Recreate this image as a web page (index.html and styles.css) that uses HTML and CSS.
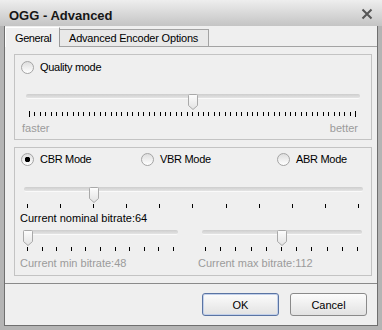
FILE: index.html
```html
<!DOCTYPE html>
<html lang="en">
<head>
  <meta charset="UTF-8">
  <title>OGG - Advanced</title>
  <link rel="stylesheet" href="styles.css">
</head>
<body>
  <div class="dialog">
    <div class="titlebar">
      <span class="title">OGG - Advanced</span>
      <svg class="close" width="12" height="12" viewBox="0 0 12 12">
        <path d="M1.5 1.5 L10.5 10.5 M10.5 1.5 L1.5 10.5" stroke="#555" stroke-width="2" fill="none"/>
      </svg>
    </div>
    <div class="client">
      <div class="tabs">
        <div class="tab active">General</div>
        <div class="tab">Advanced Encoder Options</div>
      </div>
      <div class="panel">
        <!-- Quality mode -->
        <div class="group g1">
          <label class="radio-row"><span class="radio"></span>Quality mode</label>
          <div class="slider s1" style="--v: 0.5">
            <div class="track"></div>
            <svg class="thumb" width="10" height="16" viewBox="0 0 10 16"><defs><linearGradient id="tg1" x1="0" y1="0" x2="0" y2="1"><stop offset="0" stop-color="#fdfdfd"/><stop offset="1" stop-color="#e2e2e2"/></linearGradient></defs><path d="M1.5 0.5 H8.5 Q9.5 0.5 9.5 1.5 V11.5 L5 15.5 L0.5 11.5 V1.5 Q0.5 0.5 1.5 0.5 Z" fill="url(#tg1)" stroke="#a9a9a9"/></svg>
          </div>
          <div class="ticks dense t1"><i></i><i></i><i></i><i></i><i></i><i></i><i></i><i></i><i></i><i></i><i></i><i></i><i></i><i></i><i></i><i></i><i></i><i></i><i></i><i></i><i></i><i></i><i></i><i></i><i></i><i></i><i></i><i></i><i></i><i></i><i></i><i></i><i></i><i></i><i></i><i></i><i></i><i></i><i></i><i></i><i></i><i></i><i></i><i></i><i></i><i></i><i></i><i></i><i></i><i></i><i></i><i></i><i></i><i></i><i></i><i></i><i></i><i></i><i></i><i></i><i></i></div>
          <div class="scale"><span>faster</span><span>better</span></div>
        </div>
        <!-- Bitrate modes -->
        <div class="group g2">
          <div class="modes">
            <label class="radio-row"><span class="radio checked"></span>CBR Mode</label>
            <label class="radio-row"><span class="radio"></span>VBR Mode</label>
            <label class="radio-row"><span class="radio"></span>ABR Mode</label>
          </div>
          <div class="slider s2" style="--v: 0.198">
            <div class="track"></div>
            <svg class="thumb" width="10" height="16" viewBox="0 0 10 16"><path d="M1.5 0.5 H8.5 Q9.5 0.5 9.5 1.5 V11.5 L5 15.5 L0.5 11.5 V1.5 Q0.5 0.5 1.5 0.5 Z" fill="url(#tg1)" stroke="#a9a9a9"/></svg>
          </div>
          <div class="ticks t2"><i></i><i></i><i></i><i></i><i></i><i></i><i></i><i></i><i></i><i></i><i></i></div>
          <div class="caption">Current nominal bitrate:64</div>
          <div class="pair">
            <div class="col left">
              <div class="slider s3" style="--v: 0">
                <div class="track"></div>
                <svg class="thumb" width="10" height="16" viewBox="0 0 10 16"><path d="M1.5 0.5 H8.5 Q9.5 0.5 9.5 1.5 V11.5 L5 15.5 L0.5 11.5 V1.5 Q0.5 0.5 1.5 0.5 Z" fill="url(#tg1)" stroke="#a9a9a9"/></svg>
              </div>
              <div class="ticks t3"><i></i><i></i><i></i><i></i><i></i><i></i><i></i><i></i><i></i><i></i><i></i></div>
              <div class="caption muted">Current min bitrate:48</div>
            </div>
            <div class="col right">
              <div class="slider s4" style="--v: 0.5">
                <div class="track"></div>
                <svg class="thumb" width="10" height="16" viewBox="0 0 10 16"><path d="M1.5 0.5 H8.5 Q9.5 0.5 9.5 1.5 V11.5 L5 15.5 L0.5 11.5 V1.5 Q0.5 0.5 1.5 0.5 Z" fill="url(#tg1)" stroke="#a9a9a9"/></svg>
              </div>
              <div class="ticks t4"><i></i><i></i><i></i><i></i><i></i><i></i><i></i><i></i><i></i><i></i><i></i></div>
              <div class="caption muted">Current max bitrate:112</div>
            </div>
          </div>
        </div>
      </div>
      <div class="buttons">
        <button class="btn default">OK</button>
        <button class="btn">Cancel</button>
      </div>
    </div>
  </div>
</body>
</html>
```

FILE: styles.css
```css
*, *::before, *::after { box-sizing: border-box; }
body {
  margin: 0;
  font-family: "Liberation Sans", Arial, sans-serif;
  font-size: 11px;
  color: #000;
}
.dialog {
  width: 382px;
  height: 330px;
  background: #b4b4b4;
  display: flex;
  flex-direction: column;
}
.titlebar {
  height: 26px;
  padding: 5px 9px 0 9px;
  display: flex;
  justify-content: space-between;
  background: linear-gradient(#eeeeee, #c4c4c4);
}
.title { font-weight: bold; font-size: 13px; line-height: 21px; color: #161616; }
.close { margin-top: 3px; }
.client {
  flex: 1;
  margin: 0 4px 4px;
  border: 1px solid #6f6f6f;
  border-top: 0;
  background: #efefef;
  display: flex;
  flex-direction: column;
}

/* tabs */
.tabs { height: 20px; display: flex; align-items: flex-end; }
.tab {
  width: 149px;
  height: 17px;
  padding: 2px 0 0 9px;
  line-height: 13px;
  letter-spacing: -0.2px;
  white-space: nowrap;
  background: #e9e9e9;
  border: 1px solid #a3a3a3;
  border-bottom: 0;
  border-left: 0;
}
.tab.active {
  position: relative;
  width: 55px;
  height: 20px;
  margin-bottom: -1px;
  padding: 4px 0 0 9px;
  letter-spacing: -0.4px;
  background: #efefef;
  border: 1px solid #fff;
  border-right-color: #9a9a9a;
  border-bottom: 0;
}
.panel {
  height: 238px;
  border-top: 1px solid #a3a3a3;
  border-bottom: 1px solid #8a8a8a;
  padding-top: 7px;
}

/* group boxes */
.group {
  width: 358px;
  margin-left: 9px;
  border: 1px solid #c3c3c3;
}
.g1 { height: 86px; }
.g2 { height: 129px; margin-top: 7px; }
.radio-row {
  display: flex;
  align-items: center;
  gap: 6px;
  height: 13px;
  line-height: 13px;
  letter-spacing: -0.3px;
}
.g1 .radio-row { margin: 6px 0 0 6px; }
.radio {
  width: 13px;
  height: 13px;
  border-radius: 50%;
  border: 1px solid #a4a4a4;
  background: linear-gradient(#dedede, #ffffff);
}
.radio.checked {
  background: radial-gradient(circle, #000 0 2.5px, transparent 3px), linear-gradient(#dedede, #ffffff);
}
.modes {
  display: grid;
  grid-template-columns: 120px 136px auto;
  margin: 5px 0 0 6px;
}

/* sliders */
.slider { position: relative; height: 16px; }
.track {
  height: 5px;
  margin-top: 5px;
  border-radius: 2px;
  background: linear-gradient(#cdcdcd, #e4e4e4);
  border-bottom: 1px solid #fafafa;
}
.thumb {
  position: absolute;
  top: 0;
  left: calc(var(--v) * (100% - 10px));
}
.s1 { margin: 20px 11px 0 11px; }
.s2 { margin: 21px 8px 0 9px; }
.s3 { width: 155px; margin: 4px 0 0 3px; }
.s4 { width: 160px; margin: 4px 0 0 4px; }
.ticks {
  display: flex;
  justify-content: space-between;
  align-items: flex-start;
  height: 5px;
  margin-top: 1px;
}
.ticks i { width: 1px; height: 4px; background: #000; }
.ticks.dense { height: 6px; }
.ticks.dense i { height: 4px; margin-top: 1px; }
.ticks.dense i:first-child, .ticks.dense i:last-child { height: 6px; margin-top: 0; }
.t1 { margin: 1px 14px 0 14px; }
.t2 { margin: 1px 12px 0 12px; }
.t3 { width: 147px; margin-left: 7px; }
.t4 { width: 153px; margin-left: 7px; }
.scale {
  display: flex;
  justify-content: space-between;
  margin: 5px 13px 0 7px;
  line-height: 13px;
  color: #9b9b9b;
}
.caption { margin: 3px 0 0 5px; line-height: 13px; }
.pair { display: grid; grid-template-columns: 178px 1fr; margin-left: 5px; }
.pair .caption { margin: 5px 0 0 0; }
.muted { color: #9b9b9b; }

/* buttons */
.buttons {
  flex: 1;
  display: flex;
  justify-content: flex-end;
  align-items: flex-start;
  gap: 11px;
  padding: 9px 10px 0 0;
}
.btn {
  width: 77px;
  height: 23px;
  padding: 0;
  font-family: inherit;
  font-size: 11px;
  color: #000;
  border: 1px solid #8a8a8a;
  border-radius: 3px;
  background: linear-gradient(#fcfcfc, #e2e2e2);
}
.btn.default {
  border-color: #5a74a3;
  box-shadow: inset 0 0 0 1px #c2d0ea;
}
```
